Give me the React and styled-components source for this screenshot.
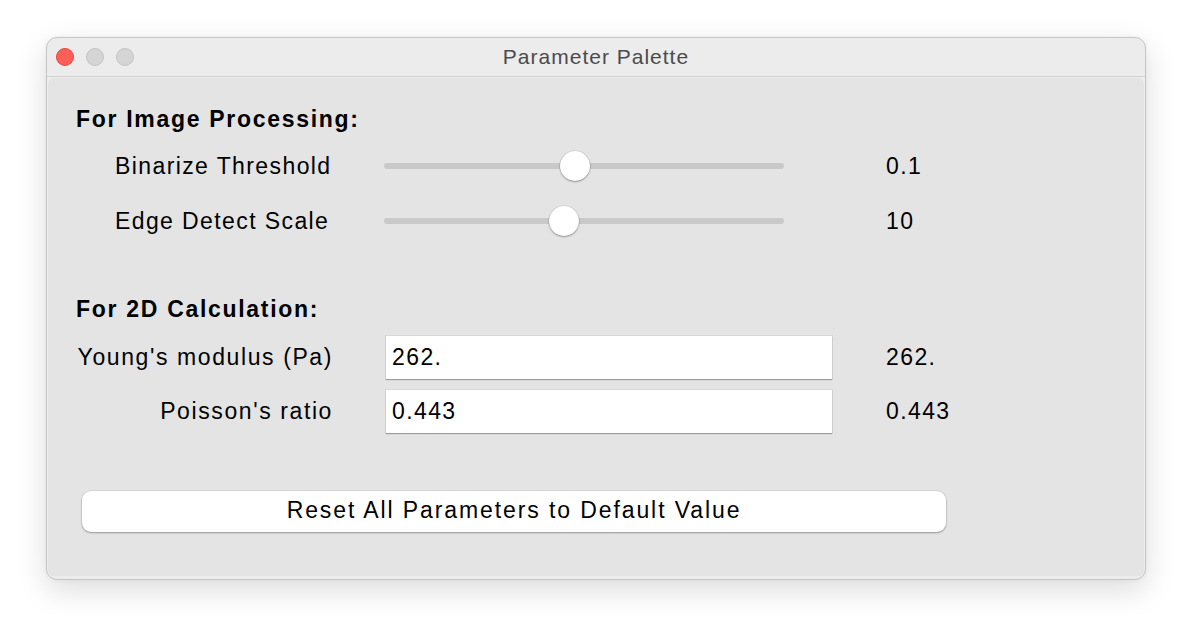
import React from 'react'
import styled, { createGlobalStyle } from 'styled-components'

const GlobalStyle = createGlobalStyle`
  html, body {
    margin: 0;
    padding: 0;
    background: #ffffff;
  }
  body {
    font-family: "Liberation Sans", Arial, sans-serif;
    color: #000;
  }
`

const Page = styled.div`
  box-sizing: border-box;
  height: 634px;
  padding: 37px 0 0 46px;
`

const Window = styled.div`
  box-sizing: border-box;
  width: 1100px;
  height: 543px;
  display: flex;
  flex-direction: column;
  background: #ececec;
  border: 1px solid #c6c6c6;
  border-radius: 11px;
  box-shadow: 0 10px 30px rgba(0, 0, 0, 0.14), 0 0 4px rgba(0, 0, 0, 0.05);
  overflow: hidden;
`

const TitleBar = styled.div`
  flex: none;
  height: 38px;
  display: grid;
  grid-template-columns: 1fr auto 1fr;
  align-items: center;
  border-bottom: 1px solid #d2d2d2;
  padding: 0 9px;
`

const Lights = styled.div`
  display: flex;
  gap: 12px;
`

const Light = styled.span`
  width: 18px;
  height: 18px;
  box-sizing: border-box;
  border-radius: 50%;
  background: ${p => (p.$close ? '#fe5f57' : '#d5d5d5')};
  border: 1px solid ${p => (p.$close ? '#e1473f' : '#c3c3c3')};
`

const Title = styled.div`
  font-size: 21px;
  letter-spacing: 1px;
  color: #4b4b4b;
`

const Panel = styled.div`
  flex: 1;
  margin: 1px 1px 3px 1px;
  border-radius: 6px;
  background: #e4e4e4;
  padding: 28px 0 0 28px;
`

const Heading = styled.div`
  font-size: 23px;
  font-weight: bold;
  letter-spacing: 1.7px;
  line-height: 26px;
  white-space: nowrap;
  margin: ${p => p.$top || 0}px 0 ${p => p.$bottom || 0}px;
`

const Grid = styled.div`
  display: grid;
  grid-template-columns: 257px 448px auto;
  grid-auto-rows: ${p => p.$rowHeight}px;
  column-gap: 52px;
  row-gap: 11px;
  align-items: center;
`

const Label = styled.div`
  font-size: 23px;
  letter-spacing: ${p => (p.$indent ? 1.4 : 1.6)}px;
  white-space: nowrap;
  text-align: ${p => (p.$indent ? 'left' : 'right')};
  padding-left: ${p => p.$indent || 0}px;
`

const Value = styled.div`
  font-size: 23px;
  letter-spacing: 1.4px;
  white-space: nowrap;
  padding-left: 1px;
`

const SliderBox = styled.div`
  position: relative;
  width: 400px;
  height: 100%;
  margin-left: -1px;
  display: flex;
  align-items: center;
`

const Track = styled.div`
  width: 100%;
  height: 6px;
  border-radius: 3px;
  background: #c9c9c9;
`

const Thumb = styled.div`
  position: absolute;
  top: 50%;
  width: 30px;
  height: 30px;
  margin: -15px 0 0 -15px;
  border-radius: 50%;
  background: #ffffff;
  box-shadow: 0 1px 2px rgba(0, 0, 0, 0.32), 0 0 0 0.5px rgba(0, 0, 0, 0.12);
`

const Field = styled.input`
  box-sizing: border-box;
  width: 446px;
  height: 43px;
  margin-left: 1px;
  border: none;
  outline: none;
  padding: 0 6px;
  background: #ffffff;
  font-family: "Liberation Sans", Arial, sans-serif;
  font-size: 23px;
  letter-spacing: 1.4px;
  color: #000;
  box-shadow: 0 1px 1px rgba(0, 0, 0, 0.28), 0 0 0 1px rgba(0, 0, 0, 0.05);
`

const ResetButton = styled.button`
  display: block;
  box-sizing: border-box;
  width: 864px;
  height: 41px;
  margin: 58px 0 0 6px;
  padding: 0 0 3px;
  border: none;
  border-radius: 9px;
  background: #ffffff;
  font-family: "Liberation Sans", Arial, sans-serif;
  font-size: 23px;
  letter-spacing: 1.9px;
  color: #000;
  white-space: nowrap;
  box-shadow: 0 1px 2px rgba(0, 0, 0, 0.3), 0 0 0 0.5px rgba(0, 0, 0, 0.1);
`

const sliders = [
  { label: 'Binarize Threshold', pos: 0.4775, value: '0.1' },
  { label: 'Edge Detect Scale', pos: 0.45, value: '10' },
]

const fields = [
  { label: "Young's modulus (Pa)", value: '262.' },
  { label: "Poisson's ratio", value: '0.443' },
]

function Slider({ pos }) {
  return (
    <SliderBox>
      <Track />
      <Thumb style={{ left: `${pos * 100}%` }} />
    </SliderBox>
  )
}

export default function App() {
  return (
    <Page>
      <GlobalStyle />
      <Window>
        <TitleBar>
          <Lights>
            <Light $close />
            <Light />
            <Light />
          </Lights>
          <Title>Parameter Palette</Title>
          <div />
        </TitleBar>
        <Panel>
          <Heading $bottom={12}>For Image Processing:</Heading>
          <Grid $rowHeight={44}>
            {sliders.map(s => (
              <React.Fragment key={s.label}>
                <Label $indent={39}>{s.label}</Label>
                <Slider pos={s.pos} />
                <Value>{s.value}</Value>
              </React.Fragment>
            ))}
          </Grid>
          <Heading $top={53} $bottom={14}>For 2D Calculation:</Heading>
          <Grid $rowHeight={43}>
            {fields.map(f => (
              <React.Fragment key={f.label}>
                <Label>{f.label}</Label>
                <Field readOnly defaultValue={f.value} />
                <Value>{f.value}</Value>
              </React.Fragment>
            ))}
          </Grid>
          <ResetButton>Reset All Parameters to Default Value</ResetButton>
        </Panel>
      </Window>
    </Page>
  )
}
